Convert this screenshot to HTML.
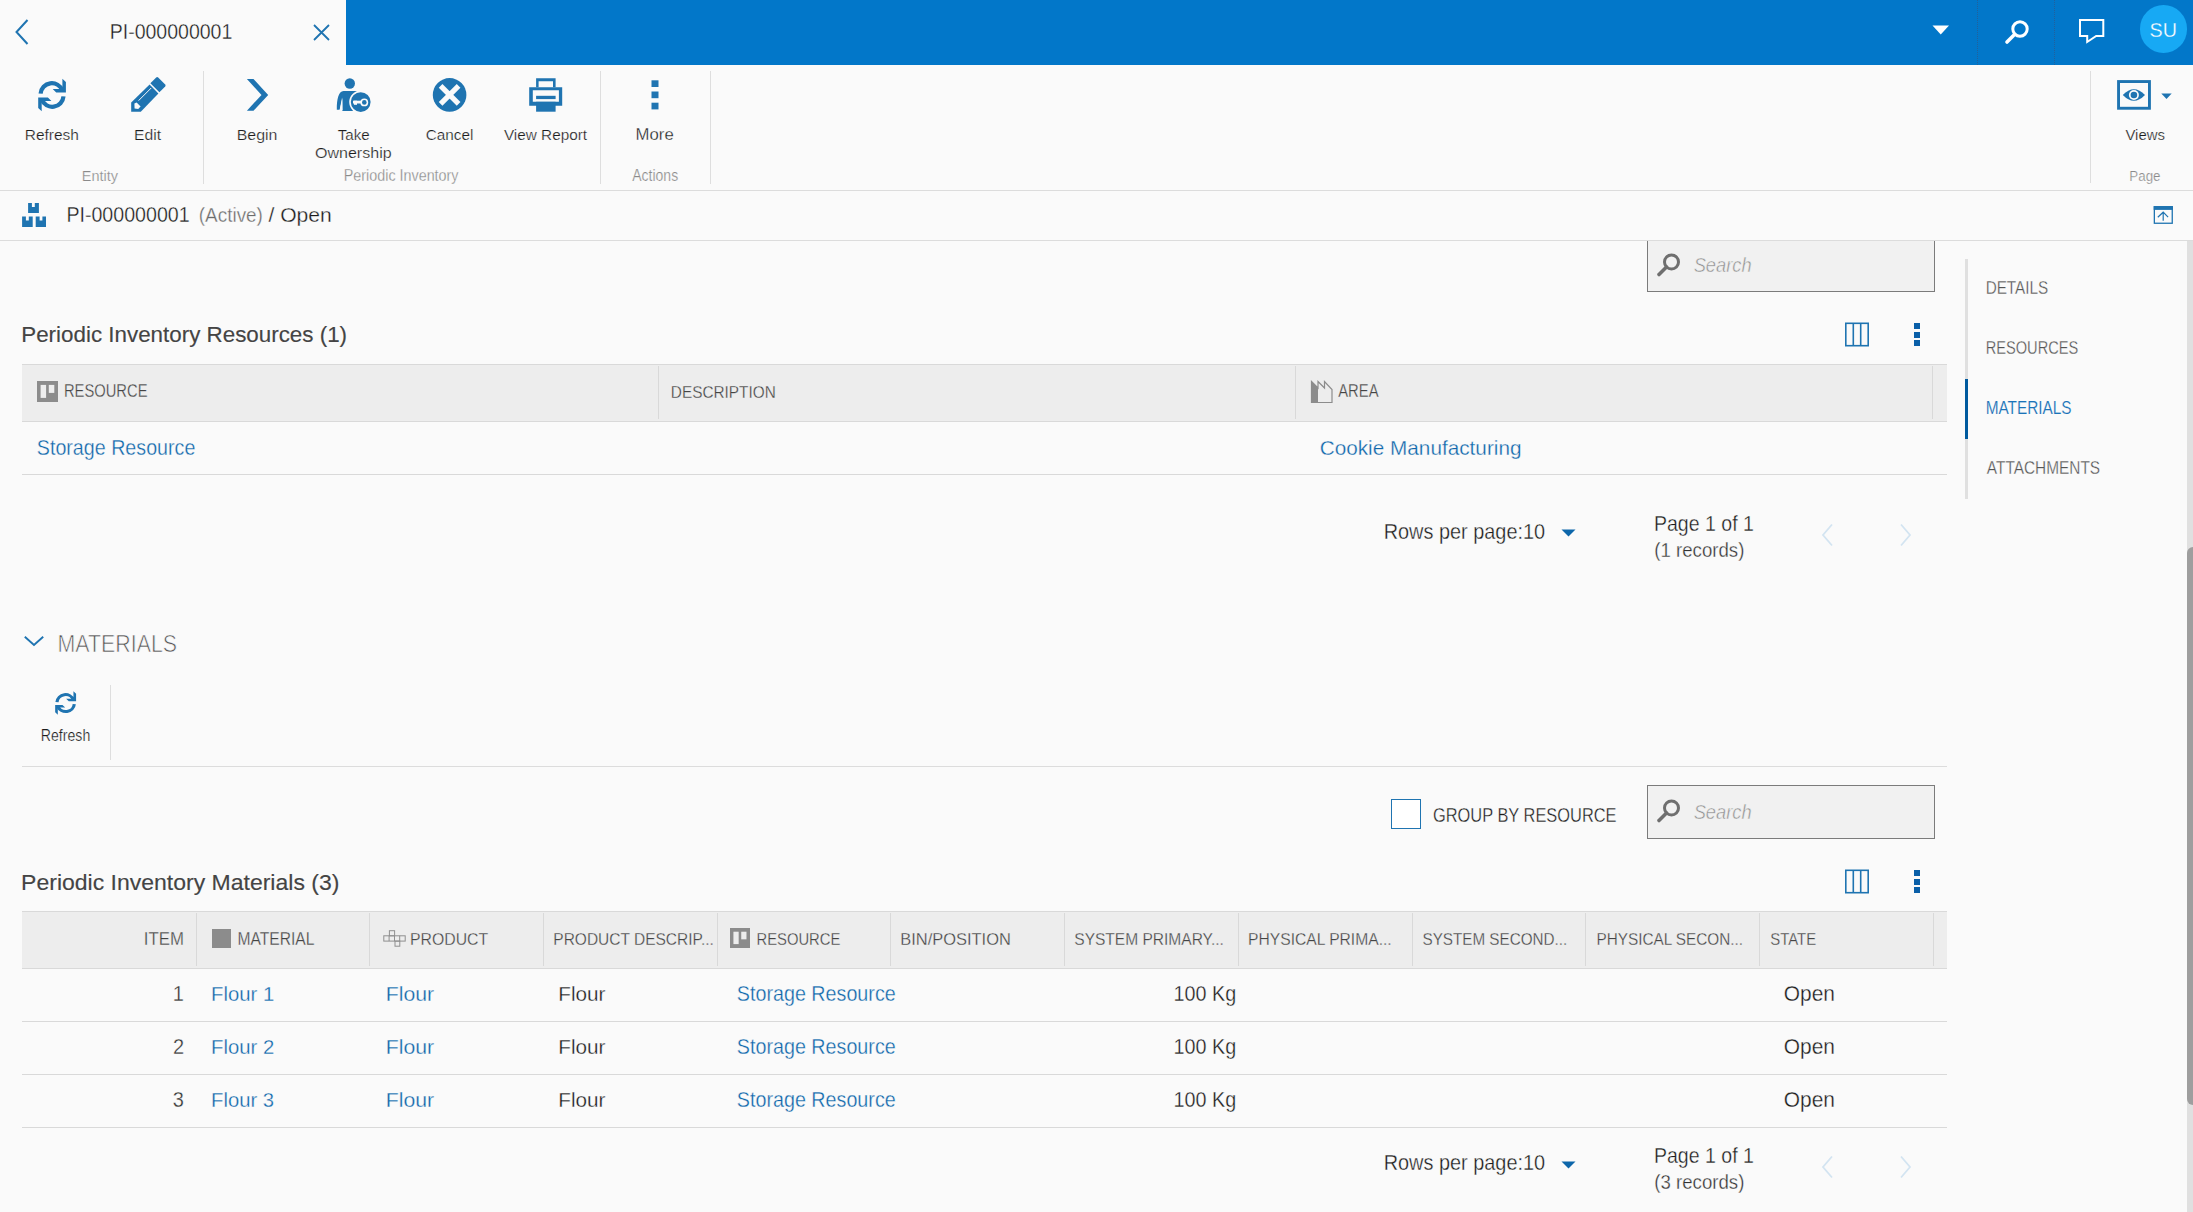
<!DOCTYPE html>
<html><head><meta charset="utf-8"><title>PI-000000001</title>
<style>
html,body{margin:0;padding:0;width:2193px;height:1212px;overflow:hidden;background:#fafafa;}
body{position:relative;font-family:"Liberation Sans",sans-serif;}
.t{position:absolute;white-space:nowrap;}
.r{position:absolute;}
.s{position:absolute;overflow:visible;}
</style></head><body>
<div class="r" style="left:346px;top:0px;width:1847px;height:65px;background:#0277c9;"></div>
<svg class="s" style="left:10px;top:16px" width="24" height="32" viewBox="0 0 24 32"><path d="M17.5 4 L6.5 16 L17.5 28" fill="none" stroke="#1f74b1" stroke-width="2"/></svg>
<div class="t" style="left:109.69px;top:23px;font-size:19.537px;line-height:19.537px;color:#1c1c1c;transform:scaleY(1.145);transform-origin:0 16px;-webkit-text-stroke:0.3px #fafafa;">PI-000000001</div>
<svg class="s" style="left:310px;top:21px" width="24" height="24" viewBox="0 0 24 24"><path d="M4 4 L19 19 M19 4 L4 19" fill="none" stroke="#1f74b1" stroke-width="1.8"/></svg>
<div class="r" style="left:1977px;top:0px;width:1px;height:65px;background:transparent;border-left:1px dotted #23609a;width:0"></div>
<div class="r" style="left:2054px;top:0px;width:1px;height:65px;background:transparent;border-left:1px dotted #23609a;width:0"></div>
<svg class="s" style="left:1930px;top:24px" width="22" height="12" viewBox="0 0 22 12"><path d="M2.5 1.5 L19 1.5 L10.75 10.5 Z" fill="#fff"/></svg>
<svg class="s" style="left:2000px;top:14px" width="34" height="34" viewBox="0 0 34 34"><circle cx="20" cy="15" r="7.2" fill="none" stroke="#fff" stroke-width="3"/><path d="M14.5 20.5 L7 28" stroke="#fff" stroke-width="3.6" stroke-linecap="round"/></svg>
<svg class="s" style="left:2074px;top:14px" width="34" height="34" viewBox="0 0 34 34"><path d="M6 6 L29.3 6 L29.3 22 L22.2 22 L13.2 28 L13.2 22 L6 22 Z" fill="none" stroke="#fff" stroke-width="2" stroke-linejoin="miter"/></svg>
<div class="r" style="left:2139.5px;top:5px;width:47.5px;height:47.5px;border-radius:50%;background:#17a9f4"></div>
<div class="t" style="left:2149.61px;top:21px;font-size:19.724px;line-height:19.724px;color:#fff;transform:scaleY(1.069);transform-origin:0 16px;-webkit-text-stroke:0.3px #17a9f4;">SU</div>
<svg class="s" style="left:34px;top:74px" width="37" height="43" viewBox="0 0 37 43"><g transform="scale(1.0,1.0)"><path d="M6.6 19.6 A11.3 11.3 0 0 1 28.4 16.4" fill="none" stroke="#1f74b1" stroke-width="4.2"/><path d="M28.4 4.7 L31.9 8.1 L31.9 18.4 L22.2 18.4 L18.7 14.9 L28.4 14.9 Z" fill="#1f74b1"/><path d="M29.5 22.4 A11.3 11.3 0 0 1 7.7 25.6" fill="none" stroke="#1f74b1" stroke-width="4.2"/><path d="M7.7 37.3 L4.2 33.9 L4.2 23.6 L13.9 23.6 L17.4 27.1 L7.7 27.1 Z" fill="#1f74b1"/></g></svg>
<div class="t" style="left:24.72px;top:127px;font-size:15.499px;line-height:15.499px;color:#1c1c1c;transform:scaleY(0.97);transform-origin:0 13px;-webkit-text-stroke:0.245px #fafafa;">Refresh</div>
<svg class="s" style="left:128px;top:74px" width="40" height="40" viewBox="0 0 40 40"><g transform="translate(-128,-74)" fill="#1f74b1"><path d="M150.4 83.2 L156.2 77.4 Q157.2 76.6 158.2 77.4 L165.2 84.4 Q166 85.4 165.2 86.4 L159.4 92.2 Z"/><path d="M149.6 84.6 L158.4 93.4 L140.8 111.7 L131.2 111.7 L131.2 102.6 Z"/></g><g transform="translate(-128,-74)"><path d="M138.6 100.6 L151.2 88" stroke="#fafafa" stroke-width="1"/><path d="M134.4 103.6 L136.6 102.4 L140.6 106.6 L138.2 109 L134.6 108.6 Z" fill="#fafafa"/></g></svg>
<div class="t" style="left:134.11px;top:127px;font-size:15.681px;line-height:15.681px;color:#1c1c1c;transform:scaleY(0.959);transform-origin:0 13px;-webkit-text-stroke:0.248px #fafafa;">Edit</div>
<div class="r" style="left:203px;top:71px;width:1px;height:113px;background:#dedede;"></div>
<svg class="s" style="left:240px;top:74px" width="35" height="42" viewBox="0 0 35 42"><path d="M6.9 5 L13.5 5 L28.2 21.1 L13.5 36.7 L6.9 36.7 L21.5 20.9 Z" fill="#1f74b1"/></svg>
<div class="t" style="left:236.68px;top:127px;font-size:15.959px;line-height:15.959px;color:#1c1c1c;transform:scaleY(0.942);transform-origin:0 13px;-webkit-text-stroke:0.252px #fafafa;">Begin</div>
<svg class="s" style="left:330px;top:74px" width="50" height="42" viewBox="0 0 50 42"><g fill="#1f74b1"><circle cx="19.8" cy="9.45" r="5.2"/><path d="M13.5 17 L27 17 L27 37 L12.4 37 L12.4 24 L9.8 35.7 L6.8 35.7 C6.8 25 8.5 17.4 13.5 17 Z"/></g><path d="M12.1 23.4 L9.6 35.9 L12.5 35.9 Z" fill="#fafafa"/><circle cx="30.7" cy="28.1" r="11.5" fill="#fafafa"/><circle cx="30.7" cy="28.1" r="9.9" fill="#1f74b1"/><g fill="#fafafa"><rect x="23" y="26.7" width="9" height="2.8"/><rect x="23.9" y="26.7" width="3.1" height="4.1"/><circle cx="34.3" cy="28.4" r="3.9"/></g><circle cx="34.3" cy="28.4" r="2.3" fill="#1f74b1"/></svg>
<div class="t" style="left:337.66px;top:127px;font-size:15.159px;line-height:15.159px;color:#1c1c1c;transform:scaleY(0.983);transform-origin:0 13px;-webkit-text-stroke:0.239px #fafafa;">Take</div>
<div class="t" style="left:314.99px;top:144px;font-size:16.047px;line-height:16.047px;color:#1c1c1c;transform:scaleY(0.937);transform-origin:0 14px;-webkit-text-stroke:0.253px #fafafa;">Ownership</div>
<svg class="s" style="left:425px;top:74px" width="50" height="42" viewBox="0 0 50 42"><circle cx="24.6" cy="20.9" r="16.8" fill="#1f74b1"/><path d="M15.6 11.9 L33.6 29.9 M33.6 11.9 L15.6 29.9" stroke="#fafafa" stroke-width="5.2"/></svg>
<div class="t" style="left:425.63px;top:127px;font-size:15.359px;line-height:15.359px;color:#1c1c1c;transform:scaleY(0.979);transform-origin:0 13px;-webkit-text-stroke:0.243px #fafafa;">Cancel</div>
<svg class="s" style="left:525px;top:74px" width="42" height="42" viewBox="0 0 42 42"><g transform="translate(-525,-74)"><path d="M536.1 78.3 L555.6 78.3 L555.6 87.2 L553 87.2 L553 81.2 L538.6 81.2 L538.6 87.2 L536.1 87.2 Z" fill="#1f74b1"/><path d="M529.2 87.2 L562.2 87.2 L562.2 105.7 L529.2 105.7 Z M532.8 90.2 L532.8 101.8 L558.9 101.8 L558.9 90.2 Z" fill="#1f74b1" fill-rule="evenodd"/><rect x="536.1" y="95.8" width="19.5" height="3.3" fill="#1f74b1"/><rect x="536.1" y="101.8" width="19.5" height="9.9" fill="#1f74b1"/></g></svg>
<div class="t" style="left:503.92px;top:127px;font-size:15.328px;line-height:15.328px;color:#1c1c1c;transform:scaleY(0.981);transform-origin:0 13px;-webkit-text-stroke:0.242px #fafafa;">View Report</div>
<div class="r" style="left:600px;top:71px;width:1px;height:113px;background:#dedede;"></div>
<svg class="s" style="left:650px;top:79px" width="10" height="33" viewBox="0 0 10 33"><g fill="#1f74b1"><rect x="1.5" y="1.3" width="7" height="6.7"/><rect x="1.5" y="12.5" width="7" height="6.7"/><rect x="1.5" y="23.7" width="7" height="6.7"/></g></svg>
<div class="t" style="left:635.62px;top:127px;font-size:16.725px;line-height:16.725px;color:#1c1c1c;transform:scaleY(0.948);transform-origin:0 13px;-webkit-text-stroke:0.264px #fafafa;">More</div>
<div class="r" style="left:710px;top:71px;width:1px;height:113px;background:#dedede;"></div>
<div class="t" style="left:81.80px;top:169px;font-size:14.493px;line-height:14.493px;color:#8a8a8a;transform:scaleY(0.98);transform-origin:0 12px;-webkit-text-stroke:0.229px #fafafa;">Entity</div>
<div class="t" style="left:343.82px;top:169px;font-size:14.343px;line-height:14.343px;color:#8a8a8a;transform:scaleY(1.12);transform-origin:0 12px;-webkit-text-stroke:0.226px #fafafa;">Periodic Inventory</div>
<div class="t" style="left:632.26px;top:169px;font-size:14.002px;line-height:14.002px;color:#8a8a8a;transform:scaleY(1.12);transform-origin:0 12px;-webkit-text-stroke:0.221px #fafafa;">Actions</div>
<div class="r" style="left:2090px;top:71px;width:1px;height:112px;background:#dedede;"></div>
<svg class="s" style="left:2110px;top:74px" width="70" height="42" viewBox="0 0 70 42"><rect x="8.55" y="7.55" width="30.9" height="26.7" fill="none" stroke="#1f74b1" stroke-width="2.9"/><path d="M12.8 21 Q23.9 9.5 35 21 Q23.9 32.5 12.8 21 Z" fill="#1f74b1"/><circle cx="23.9" cy="21" r="5" fill="#fafafa"/><circle cx="23.9" cy="21" r="3.3" fill="#1f74b1"/><path d="M51.3 19.4 L61.7 19.4 L56.5 24.9 Z" fill="#1f74b1"/></svg>
<div class="t" style="left:2125.43px;top:128px;font-size:14.943px;line-height:14.943px;color:#1c1c1c;transform:scaleY(1.006);transform-origin:0 12px;-webkit-text-stroke:0.236px #fafafa;">Views</div>
<div class="t" style="left:2129.30px;top:170px;font-size:13.394px;line-height:13.394px;color:#8a8a8a;transform:scaleY(1.12);transform-origin:0 11px;-webkit-text-stroke:0.211px #fafafa;">Page</div>
<div class="r" style="left:0px;top:190px;width:2193px;height:1px;background:#dcdcdc;"></div>
<svg class="s" style="left:18px;top:198px" width="34" height="34" viewBox="0 0 34 34"><g fill="#1f74b1"><path d="M10.1 5.05 L13.9 5.05 L13.9 9 L16.8 9 L16.8 5.05 L20.9 5.05 L20.9 15 L10.1 15 Z"/><path d="M4.1 18.5 L7.9 18.5 L7.9 22.4 L10.8 22.4 L10.8 18.5 L14.7 18.5 L14.7 28.9 L4.1 28.9 Z"/><path d="M17.7 18.5 L21.6 18.5 L21.6 22.4 L24.4 22.4 L24.4 18.5 L28 18.5 L28 28.9 L17.7 28.9 Z"/></g></svg>
<div class="t" style="left:66.38px;top:206px;font-size:19.634px;line-height:19.634px;color:#1c1c1c;transform:scaleY(1.081);transform-origin:0 16px;-webkit-text-stroke:0.3px #fafafa;">PI-000000001</div>
<div class="t" style="left:198.82px;top:207px;font-size:18.928px;line-height:18.928px;color:#6b6b6b;transform:scaleY(1.078);transform-origin:0 15px;-webkit-text-stroke:0.299px #fafafa;">(Active)</div>
<div class="t" style="left:268.40px;top:204px;font-size:21.140px;line-height:21.140px;color:#1c1c1c;transform:scaleY(0.966);transform-origin:0 18px;-webkit-text-stroke:0.3px #fafafa;">/ Open</div>
<svg class="s" style="left:2148px;top:200px" width="32" height="30" viewBox="0 0 32 30"><rect x="6.35" y="6.75" width="17.9" height="16.5" fill="none" stroke="#1f74b1" stroke-width="1.3"/><rect x="5.7" y="6.1" width="19.2" height="3.8" fill="#1f74b1"/><path d="M15.2 20.8 L15.2 12.4 M9.8 17.2 L15.2 12.2 L20.1 17.2" fill="none" stroke="#1f74b1" stroke-width="1.2"/></svg>
<div class="r" style="left:0px;top:240px;width:2193px;height:1px;background:#dcdcdc;"></div>
<div class="r" style="left:2187px;top:241px;width:6px;height:971px;background:#e0e0e0;"></div>
<div class="r" style="left:2187px;top:547px;width:6px;height:558px;background:#9e9e9e;border-radius:6px 0 0 6px"></div>
<div class="r" style="left:1965px;top:259px;width:3px;height:240px;background:#e0e0e0;"></div>
<div class="r" style="left:1965px;top:379px;width:3px;height:60px;background:#005a9e;"></div>
<div class="t" style="left:1985.64px;top:281px;font-size:15.299px;line-height:15.299px;color:#555;transform:scaleY(1.143);transform-origin:0 13px;-webkit-text-stroke:0.242px #fafafa;">DETAILS</div>
<div class="t" style="left:1985.69px;top:342px;font-size:14.627px;line-height:14.627px;color:#555;transform:scaleY(1.196);transform-origin:0 12px;-webkit-text-stroke:0.231px #fafafa;">RESOURCES</div>
<div class="t" style="left:1985.63px;top:401px;font-size:15.382px;line-height:15.382px;color:#1b73b8;transform:scaleY(1.137);transform-origin:0 13px;-webkit-text-stroke:0.12px #fafafa;">MATERIALS</div>
<div class="t" style="left:1986.86px;top:461px;font-size:15.414px;line-height:15.414px;color:#555;transform:scaleY(1.135);transform-origin:0 13px;-webkit-text-stroke:0.243px #fafafa;">ATTACHMENTS</div>
<div class="r" style="left:1647px;top:241px;width:288px;height:51px;background:#f1f1f1;border:1px solid #7b7b7b;border-top-width:0;box-sizing:border-box"></div>
<svg class="s" style="left:1654px;top:252px" width="28" height="28" viewBox="0 0 28 28"><circle cx="17.5" cy="10" r="7" fill="none" stroke="#6f6f6f" stroke-width="3"/><path d="M12.5 15 L5 22.5" stroke="#6f6f6f" stroke-width="3.6" stroke-linecap="round"/></svg>
<div class="t" style="left:1693.70px;top:257px;font-size:18.288px;line-height:18.288px;color:#8f8f8f;font-style:italic;transform:scaleY(1.154);transform-origin:0 15px;-webkit-text-stroke:0.45px #f1f1f1;">Search</div>
<div class="t" style="left:21.25px;top:324px;font-size:22.386px;line-height:22.386px;color:#444444;transform:scaleY(0.99);transform-origin:0 18px;-webkit-text-stroke:0.15px #444;">Periodic Inventory Resources (1)</div>
<svg class="s" style="left:1844px;top:321.5px" width="26" height="25" viewBox="0 0 26 25"><g fill="none" stroke="#1f74b1" stroke-width="1.6"><rect x="1.8" y="1.3" width="22.4" height="22.4"/><path d="M9.3 1.3 L9.3 23.7 M16.7 1.3 L16.7 23.7"/></g></svg>
<svg class="s" style="left:1912px;top:321.5px" width="10" height="25" viewBox="0 0 10 25"><g fill="#0a5fa8"><rect x="2" y="1" width="6" height="6"/><rect x="2" y="10" width="6" height="6"/><rect x="2" y="18" width="6" height="6"/></g></svg>
<div class="r" style="left:22px;top:364px;width:1925px;height:58px;background:#ededed;border-top:1px solid #d9d9d9;border-bottom:1px solid #d9d9d9;box-sizing:border-box"></div>
<div class="r" style="left:658px;top:366px;width:1px;height:53px;background:#d9d9d9;"></div>
<div class="r" style="left:1295px;top:366px;width:1px;height:53px;background:#d9d9d9;"></div>
<div class="r" style="left:1932px;top:366px;width:1px;height:53px;background:#d9d9d9;"></div>
<svg class="s" style="left:37px;top:381px" width="21" height="21" viewBox="0 0 21 21"><g transform="scale(1.0)"><rect x="0" y="0" width="21" height="21" fill="#8c8c8c"/><rect x="3.6" y="3.9" width="5.5" height="13" fill="#ededed"/><rect x="11.8" y="3.9" width="5.5" height="8" fill="#ededed"/></g></svg>
<div class="t" style="left:63.98px;top:385px;font-size:14.741px;line-height:14.741px;color:#444444;transform:scaleY(1.187);transform-origin:0 12px;-webkit-text-stroke:0.233px #ededed;">RESOURCE</div>
<div class="t" style="left:670.83px;top:385px;font-size:15.367px;line-height:15.367px;color:#444444;transform:scaleY(1.11);transform-origin:0 13px;-webkit-text-stroke:0.243px #ededed;">DESCRIPTION</div>
<svg class="s" style="left:1310px;top:380px" width="24" height="24" viewBox="0 0 24 24"><path d="M1.5 1.5 L8 8 L8 1.5 L14.5 8 L14.5 1.5 L22 9.5 L22 22.5 L1.5 22.5 Z" fill="none" stroke="#8c8c8c" stroke-width="1.2"/><path d="M1.5 1.5 L8 8 L8 22.5 L1.5 22.5 Z" fill="#8c8c8c"/></svg>
<div class="t" style="left:1338.26px;top:385px;font-size:14.793px;line-height:14.793px;color:#444444;transform:scaleY(1.18);transform-origin:0 12px;-webkit-text-stroke:0.234px #ededed;">AREA</div>
<div class="t" style="left:36.81px;top:439px;font-size:19.680px;line-height:19.680px;color:#0d66aa;transform:scaleY(1.115);transform-origin:0 16px;-webkit-text-stroke:0.3px #fafafa;">Storage Resource</div>
<div class="t" style="left:1319.66px;top:438px;font-size:20.759px;line-height:20.759px;color:#0d66aa;transform:scaleY(0.983);transform-origin:0 17px;-webkit-text-stroke:0.3px #fafafa;">Cookie Manufacturing</div>
<div class="r" style="left:22px;top:474px;width:1925px;height:1px;background:#d9d9d9;"></div>
<div class="t" style="left:1383.66px;top:523px;font-size:19.900px;line-height:19.900px;color:#1c1c1c;transform:scaleY(1.138);transform-origin:0 16px;-webkit-text-stroke:0.3px #fafafa;">Rows per page:10</div>
<svg class="s" style="left:1559px;top:527px" width="19" height="12" viewBox="0 0 19 12"><path d="M2.5 2.5 L16.5 2.5 L9.5 9.5 Z" fill="#0d66aa"/></svg>
<div class="t" style="left:1653.89px;top:515px;font-size:19.559px;line-height:19.559px;color:#1c1c1c;transform:scaleY(1.09);transform-origin:0 16px;-webkit-text-stroke:0.3px #fafafa;">Page 1 of 1</div>
<div class="t" style="left:1654.34px;top:542px;font-size:18.631px;line-height:18.631px;color:#333;transform:scaleY(1.08);transform-origin:0 15px;-webkit-text-stroke:0.294px #fafafa;">(1 records)</div>
<svg class="s" style="left:1818px;top:522px" width="20" height="28" viewBox="0 0 20 28"><path d="M14 2.5 L5 13 L14 23.5" fill="none" stroke="#d3e4f1" stroke-width="1.8"/></svg>
<svg class="s" style="left:1895px;top:522px" width="20" height="28" viewBox="0 0 20 28"><path d="M6 2.5 L15 13 L6 23.5" fill="none" stroke="#d3e4f1" stroke-width="1.8"/></svg>
<svg class="s" style="left:22px;top:632px" width="26" height="16" viewBox="0 0 26 16"><path d="M2.8 4.8 L12 13 L21.2 4.8" fill="none" stroke="#1f74b1" stroke-width="1.9"/></svg>
<div class="t" style="left:57.53px;top:635px;font-size:21.399px;line-height:21.399px;color:#555;transform:scaleY(1.159);transform-origin:0 17px;-webkit-text-stroke:0.6px #fafafa;">MATERIALS</div>
<svg class="s" style="left:51.8px;top:687.8px" width="29" height="32" viewBox="0 0 29 32"><g transform="scale(0.755,0.718)"><path d="M6.6 19.6 A11.3 11.3 0 0 1 28.4 16.4" fill="none" stroke="#1f74b1" stroke-width="4.2"/><path d="M28.4 4.7 L31.9 8.1 L31.9 18.4 L22.2 18.4 L18.7 14.9 L28.4 14.9 Z" fill="#1f74b1"/><path d="M29.5 22.4 A11.3 11.3 0 0 1 7.7 25.6" fill="none" stroke="#1f74b1" stroke-width="4.2"/><path d="M7.7 37.3 L4.2 33.9 L4.2 23.6 L13.9 23.6 L17.4 27.1 L7.7 27.1 Z" fill="#1f74b1"/></g></svg>
<div class="t" style="left:40.83px;top:729px;font-size:14.128px;line-height:14.128px;color:#1c1c1c;transform:scaleY(1.12);transform-origin:0 12px;-webkit-text-stroke:0.223px #fafafa;">Refresh</div>
<div class="r" style="left:110px;top:685px;width:1px;height:75px;background:#dedede;"></div>
<div class="r" style="left:22px;top:766px;width:1925px;height:1px;background:#dcdcdc;"></div>
<div class="r" style="left:1391px;top:799px;width:30px;height:30px;border:1.5px solid #1f74b1;box-sizing:border-box;background:#fff"></div>
<div class="t" style="left:1432.98px;top:808px;font-size:16.418px;line-height:16.418px;color:#1c1c1c;transform:scaleY(1.205);transform-origin:0 14px;-webkit-text-stroke:0.259px #fafafa;">GROUP BY RESOURCE</div>
<div class="r" style="left:1647px;top:785px;width:288px;height:54px;background:#f1f1f1;border:1px solid #7b7b7b;border-top-width:1px;box-sizing:border-box"></div>
<svg class="s" style="left:1654px;top:798px" width="28" height="28" viewBox="0 0 28 28"><circle cx="17.5" cy="10" r="7" fill="none" stroke="#6f6f6f" stroke-width="3"/><path d="M12.5 15 L5 22.5" stroke="#6f6f6f" stroke-width="3.6" stroke-linecap="round"/></svg>
<div class="t" style="left:1693.70px;top:804px;font-size:18.288px;line-height:18.288px;color:#8f8f8f;font-style:italic;transform:scaleY(1.154);transform-origin:0 15px;-webkit-text-stroke:0.45px #f1f1f1;">Search</div>
<div class="t" style="left:21.10px;top:871px;font-size:23.001px;line-height:23.001px;color:#444444;transform:scaleY(0.99);transform-origin:0 19px;-webkit-text-stroke:0.15px #444;">Periodic Inventory Materials (3)</div>
<svg class="s" style="left:1844px;top:868.5px" width="26" height="25" viewBox="0 0 26 25"><g fill="none" stroke="#1f74b1" stroke-width="1.6"><rect x="1.8" y="1.3" width="22.4" height="22.4"/><path d="M9.3 1.3 L9.3 23.7 M16.7 1.3 L16.7 23.7"/></g></svg>
<svg class="s" style="left:1912px;top:868.5px" width="10" height="25" viewBox="0 0 10 25"><g fill="#0a5fa8"><rect x="2" y="1" width="6" height="6"/><rect x="2" y="10" width="6" height="6"/><rect x="2" y="18" width="6" height="6"/></g></svg>
<div class="r" style="left:22px;top:911px;width:1925px;height:58px;background:#ededed;border-top:1px solid #d9d9d9;border-bottom:1px solid #d9d9d9;box-sizing:border-box"></div>
<div class="r" style="left:196px;top:913px;width:1px;height:53px;background:#d9d9d9;"></div>
<div class="r" style="left:369px;top:913px;width:1px;height:53px;background:#d9d9d9;"></div>
<div class="r" style="left:543px;top:913px;width:1px;height:53px;background:#d9d9d9;"></div>
<div class="r" style="left:717px;top:913px;width:1px;height:53px;background:#d9d9d9;"></div>
<div class="r" style="left:890px;top:913px;width:1px;height:53px;background:#d9d9d9;"></div>
<div class="r" style="left:1064px;top:913px;width:1px;height:53px;background:#d9d9d9;"></div>
<div class="r" style="left:1238px;top:913px;width:1px;height:53px;background:#d9d9d9;"></div>
<div class="r" style="left:1412px;top:913px;width:1px;height:53px;background:#d9d9d9;"></div>
<div class="r" style="left:1585px;top:913px;width:1px;height:53px;background:#d9d9d9;"></div>
<div class="r" style="left:1759px;top:913px;width:1px;height:53px;background:#d9d9d9;"></div>
<div class="r" style="left:1933px;top:913px;width:1px;height:53px;background:#d9d9d9;"></div>
<div class="t" style="left:143.84px;top:932px;font-size:16.814px;line-height:16.814px;color:#444444;transform:scaleY(1.09);transform-origin:0 13px;-webkit-text-stroke:0.265px #ededed;">ITEM</div>
<div class="r" style="left:212px;top:929px;width:19px;height:19px;background:#8c8c8c;"></div>
<div class="t" style="left:237.41px;top:932px;font-size:15.655px;line-height:15.655px;color:#444444;transform:scaleY(1.124);transform-origin:0 13px;-webkit-text-stroke:0.247px #ededed;">MATERIAL</div>
<svg class="s" style="left:378px;top:924px" width="32" height="28" viewBox="0 0 32 28"><g fill="none" stroke="#8f8f8f" stroke-width="1"><rect x="5.8" y="11.8" width="21.4" height="5.3"/><rect x="11.4" y="6.7" width="5.2" height="5.1"/><rect x="17" y="17.1" width="4.8" height="5.1"/><path d="M11.1 11.8 L11.1 17.1 M16.5 11.8 L16.5 17.1 M21.7 11.8 L21.7 17.1"/></g></svg>
<div class="t" style="left:410.00px;top:932px;font-size:15.814px;line-height:15.814px;color:#444444;transform:scaleY(1.097);transform-origin:0 13px;-webkit-text-stroke:0.25px #ededed;">PRODUCT</div>
<div class="t" style="left:553.32px;top:932px;font-size:15.517px;line-height:15.517px;color:#444444;transform:scaleY(1.118);transform-origin:0 13px;-webkit-text-stroke:0.245px #ededed;">PRODUCT DESCRIP...</div>
<svg class="s" style="left:730px;top:928px" width="20" height="20" viewBox="0 0 20 20"><g transform="scale(0.9523809523809523)"><rect x="0" y="0" width="21" height="21" fill="#8c8c8c"/><rect x="3.6" y="3.9" width="5.5" height="13" fill="#ededed"/><rect x="11.8" y="3.9" width="5.5" height="8" fill="#ededed"/></g></svg>
<div class="t" style="left:756.48px;top:933px;font-size:14.813px;line-height:14.813px;color:#444444;transform:scaleY(1.171);transform-origin:0 12px;-webkit-text-stroke:0.234px #ededed;">RESOURCE</div>
<div class="t" style="left:900.34px;top:931px;font-size:16.454px;line-height:16.454px;color:#444444;transform:scaleY(1.014);transform-origin:0 14px;-webkit-text-stroke:0.26px #ededed;">BIN/POSITION</div>
<div class="t" style="left:1074.30px;top:932px;font-size:15.541px;line-height:15.541px;color:#444444;transform:scaleY(1.116);transform-origin:0 13px;-webkit-text-stroke:0.245px #ededed;">SYSTEM PRIMARY...</div>
<div class="t" style="left:1248.11px;top:932px;font-size:15.641px;line-height:15.641px;color:#444444;transform:scaleY(1.109);transform-origin:0 13px;-webkit-text-stroke:0.247px #ededed;">PHYSICAL PRIMA...</div>
<div class="t" style="left:1422.51px;top:932px;font-size:15.244px;line-height:15.244px;color:#444444;transform:scaleY(1.138);transform-origin:0 13px;-webkit-text-stroke:0.241px #ededed;">SYSTEM SECOND...</div>
<div class="t" style="left:1596.44px;top:932px;font-size:15.322px;line-height:15.322px;color:#444444;transform:scaleY(1.132);transform-origin:0 13px;-webkit-text-stroke:0.242px #ededed;">PHYSICAL SECON...</div>
<div class="t" style="left:1770.33px;top:933px;font-size:14.895px;line-height:14.895px;color:#444444;transform:scaleY(1.165);transform-origin:0 12px;-webkit-text-stroke:0.235px #ededed;">STATE</div>
<div class="t" style="left:172.85px;top:984px;font-size:20.000px;line-height:20.000px;color:#333;transform:scaleY(1.105);transform-origin:0 17px;-webkit-text-stroke:0.3px #fafafa;">1</div>
<div class="t" style="left:211.02px;top:984px;font-size:20.319px;line-height:20.319px;color:#0d66aa;transform:scaleY(1.032);transform-origin:0 17px;-webkit-text-stroke:0.3px #fafafa;">Flour 1</div>
<div class="t" style="left:385.74px;top:984px;font-size:21.284px;line-height:21.284px;color:#0d66aa;transform:scaleY(0.985);transform-origin:0 17px;-webkit-text-stroke:0.3px #fafafa;">Flour</div>
<div class="t" style="left:558.29px;top:984px;font-size:20.734px;line-height:20.734px;color:#1c1c1c;transform:scaleY(1.011);transform-origin:0 17px;-webkit-text-stroke:0.3px #fafafa;">Flour</div>
<div class="t" style="left:736.81px;top:985px;font-size:19.730px;line-height:19.730px;color:#0d66aa;transform:scaleY(1.112);transform-origin:0 16px;-webkit-text-stroke:0.3px #fafafa;">Storage Resource</div>
<div class="t" style="left:1173.52px;top:985px;font-size:19.769px;line-height:19.769px;color:#1c1c1c;transform:scaleY(1.088);transform-origin:0 16px;-webkit-text-stroke:0.3px #fafafa;">100 Kg</div>
<div class="t" style="left:1783.81px;top:984px;font-size:20.942px;line-height:20.942px;color:#1c1c1c;transform:scaleY(1.054);transform-origin:0 17px;-webkit-text-stroke:0.3px #fafafa;">Open</div>
<div class="r" style="left:22px;top:1021px;width:1925px;height:1px;background:#d9d9d9;"></div>
<div class="t" style="left:172.90px;top:1037px;font-size:20.000px;line-height:20.000px;color:#333;transform:scaleY(1.09);transform-origin:0 17px;-webkit-text-stroke:0.3px #fafafa;">2</div>
<div class="t" style="left:211.02px;top:1037px;font-size:20.336px;line-height:20.336px;color:#0d66aa;transform:scaleY(1.031);transform-origin:0 17px;-webkit-text-stroke:0.3px #fafafa;">Flour 2</div>
<div class="t" style="left:385.74px;top:1037px;font-size:21.284px;line-height:21.284px;color:#0d66aa;transform:scaleY(0.985);transform-origin:0 17px;-webkit-text-stroke:0.3px #fafafa;">Flour</div>
<div class="t" style="left:558.29px;top:1037px;font-size:20.734px;line-height:20.734px;color:#1c1c1c;transform:scaleY(1.011);transform-origin:0 17px;-webkit-text-stroke:0.3px #fafafa;">Flour</div>
<div class="t" style="left:736.81px;top:1038px;font-size:19.730px;line-height:19.730px;color:#0d66aa;transform:scaleY(1.112);transform-origin:0 16px;-webkit-text-stroke:0.3px #fafafa;">Storage Resource</div>
<div class="t" style="left:1173.52px;top:1038px;font-size:19.769px;line-height:19.769px;color:#1c1c1c;transform:scaleY(1.088);transform-origin:0 16px;-webkit-text-stroke:0.3px #fafafa;">100 Kg</div>
<div class="t" style="left:1783.81px;top:1037px;font-size:20.942px;line-height:20.942px;color:#1c1c1c;transform:scaleY(1.054);transform-origin:0 17px;-webkit-text-stroke:0.3px #fafafa;">Open</div>
<div class="r" style="left:22px;top:1074px;width:1925px;height:1px;background:#d9d9d9;"></div>
<div class="t" style="left:172.75px;top:1090px;font-size:20.000px;line-height:20.000px;color:#333;transform:scaleY(1.09);transform-origin:0 17px;-webkit-text-stroke:0.3px #fafafa;">3</div>
<div class="t" style="left:211.03px;top:1090px;font-size:20.285px;line-height:20.285px;color:#0d66aa;transform:scaleY(1.034);transform-origin:0 17px;-webkit-text-stroke:0.3px #fafafa;">Flour 3</div>
<div class="t" style="left:385.74px;top:1090px;font-size:21.284px;line-height:21.284px;color:#0d66aa;transform:scaleY(0.985);transform-origin:0 17px;-webkit-text-stroke:0.3px #fafafa;">Flour</div>
<div class="t" style="left:558.29px;top:1090px;font-size:20.734px;line-height:20.734px;color:#1c1c1c;transform:scaleY(1.011);transform-origin:0 17px;-webkit-text-stroke:0.3px #fafafa;">Flour</div>
<div class="t" style="left:736.81px;top:1091px;font-size:19.730px;line-height:19.730px;color:#0d66aa;transform:scaleY(1.112);transform-origin:0 16px;-webkit-text-stroke:0.3px #fafafa;">Storage Resource</div>
<div class="t" style="left:1173.52px;top:1091px;font-size:19.769px;line-height:19.769px;color:#1c1c1c;transform:scaleY(1.088);transform-origin:0 16px;-webkit-text-stroke:0.3px #fafafa;">100 Kg</div>
<div class="t" style="left:1783.81px;top:1090px;font-size:20.942px;line-height:20.942px;color:#1c1c1c;transform:scaleY(1.054);transform-origin:0 17px;-webkit-text-stroke:0.3px #fafafa;">Open</div>
<div class="r" style="left:22px;top:1127px;width:1925px;height:1px;background:#d9d9d9;"></div>
<div class="t" style="left:1383.66px;top:1154px;font-size:19.900px;line-height:19.900px;color:#1c1c1c;transform:scaleY(1.138);transform-origin:0 16px;-webkit-text-stroke:0.3px #fafafa;">Rows per page:10</div>
<svg class="s" style="left:1559px;top:1158.5px" width="19" height="12" viewBox="0 0 19 12"><path d="M2.5 2.5 L16.5 2.5 L9.5 9.5 Z" fill="#0d66aa"/></svg>
<div class="t" style="left:1653.89px;top:1147px;font-size:19.559px;line-height:19.559px;color:#1c1c1c;transform:scaleY(1.09);transform-origin:0 16px;-webkit-text-stroke:0.3px #fafafa;">Page 1 of 1</div>
<div class="t" style="left:1654.34px;top:1174px;font-size:18.631px;line-height:18.631px;color:#333;transform:scaleY(1.08);transform-origin:0 15px;-webkit-text-stroke:0.294px #fafafa;">(3 records)</div>
<svg class="s" style="left:1818px;top:1153.5px" width="20" height="28" viewBox="0 0 20 28"><path d="M14 2.5 L5 13 L14 23.5" fill="none" stroke="#d3e4f1" stroke-width="1.8"/></svg>
<svg class="s" style="left:1895px;top:1153.5px" width="20" height="28" viewBox="0 0 20 28"><path d="M6 2.5 L15 13 L6 23.5" fill="none" stroke="#d3e4f1" stroke-width="1.8"/></svg>
</body></html>
